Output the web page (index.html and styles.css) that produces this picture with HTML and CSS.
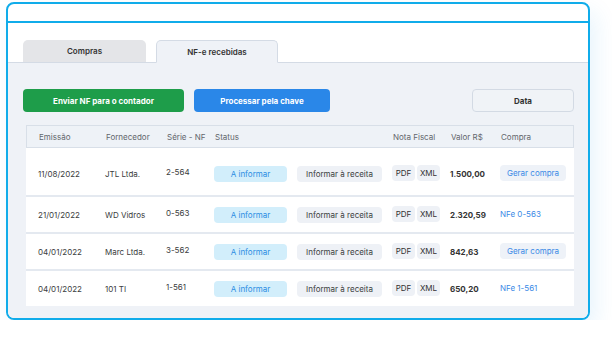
FILE: index.html
```html
<!DOCTYPE html>
<html lang="pt-BR">
<head>
<meta charset="utf-8">
<title>NF-e recebidas</title>
<link rel="stylesheet" href="styles.css">
</head>
<body>
<div class="frame">
  <div class="topbar"></div>
  <div class="tabs">
    <div class="tab tab-off">Compras</div>
    <div class="tab tab-on">NF-e recebidas</div>
  </div>
  <div class="content">
    <div class="actions">
      <button class="btn btn-green">Enviar NF para o contador</button>
      <button class="btn btn-blue">Processar pela chave</button>
      <button class="btn btn-data">Data</button>
    </div>
    <div class="table">
      <div class="row head">
        <span>Emissão</span><span>Fornecedor</span><span>Série - NF</span><span>Status</span><span></span><span>Nota Fiscal</span><span>Valor R$</span><span>Compra</span>
      </div>
      <div class="row first">
        <span>11/08/2022</span><span>JTL Ltda.</span><span class="serie">2-564</span>
        <span><i class="pill status">A informar</i></span>
        <span><i class="pill inform">Informar à receita</i></span>
        <span class="docs"><i class="chip">PDF</i><i class="chip">XML</i></span>
        <span class="val">1.500,00</span>
        <span><i class="pill gerar">Gerar compra</i></span>
      </div>
      <div class="row">
        <span>21/01/2022</span><span>WD Vidros</span><span class="serie">0-563</span>
        <span><i class="pill status">A informar</i></span>
        <span><i class="pill inform">Informar à receita</i></span>
        <span class="docs"><i class="chip">PDF</i><i class="chip">XML</i></span>
        <span class="val">2.320,59</span>
        <span class="link">NFe 0-563</span>
      </div>
      <div class="row">
        <span>04/01/2022</span><span>Marc Ltda.</span><span class="serie">3-562</span>
        <span><i class="pill status">A informar</i></span>
        <span><i class="pill inform">Informar à receita</i></span>
        <span class="docs"><i class="chip">PDF</i><i class="chip">XML</i></span>
        <span class="val">842,63</span>
        <span><i class="pill gerar">Gerar compra</i></span>
      </div>
      <div class="row">
        <span>04/01/2022</span><span>101 TI</span><span class="serie">1-561</span>
        <span><i class="pill status">A informar</i></span>
        <span><i class="pill inform">Informar à receita</i></span>
        <span class="docs"><i class="chip">PDF</i><i class="chip">XML</i></span>
        <span class="val">650,20</span>
        <span class="link">NFe 1-561</span>
      </div>
    </div>
  </div>
</div>
</body>
</html>
```
FILE: styles.css
```css
* { box-sizing: border-box; }
html, body { margin: 0; background: #fff; }
body {
  font-family: Inter, "Noto Sans", sans-serif;
  font-size: 8px;
  color: #3b3d40;
  padding: 2px 0 0 6px;
}
.frame {
  width: 584px;
  height: 318px;
  border: 2px solid #10acea;
  border-radius: 8px;
  overflow: hidden;
  background: #fff;
  display: flex;
  flex-direction: column;
  box-shadow: 6px 10px 22px rgba(30, 150, 230, 0.10);
}
.topbar {
  height: 19px;
  flex: none;
  border-bottom: 2px solid #10acea;
}
.tabs {
  flex: none;
  display: flex;
  gap: 10px;
  padding: 17px 0 0 15px;
  border-bottom: 1px solid #d4dbe5;
}
.tab {
  height: 23px;
  display: flex;
  align-items: center;
  justify-content: center;
  font-weight: 600;
  color: #333;
  border-radius: 5px 5px 0 0;
  margin-bottom: -1px;
}
.tab-off { width: 123px; background: #e4e5e8; border-bottom: 1px solid #d4dbe5; }
.tab-on { width: 122px; background: #eff2f7; border: 1px solid #d4dbe5; border-bottom: 1px solid #eff2f7; }
.content {
  flex: 1;
  background: #eff2f7;
  padding: 26px 14px 0 15px;
}
.actions {
  display: flex;
  gap: 10px;
  height: 23px;
}
.btn {
  font: inherit;
  font-weight: 700;
  height: 23px;
  border-radius: 4px;
  border: none;
  padding: 0;
  color: #fff;
}
.btn-green { width: 161px; background: #1e9d4a; }
.btn-blue { width: 136px; background: #2a87e8; }
.btn-data {
  width: 102px;
  margin-left: auto;
  background: #f0f3f7;
  border: 1px solid #d3dae4;
  color: #333;
}
.table {
  margin: 13px 0 0 3px;
  width: 548px;
  background: #fff;
}
.row {
  display: grid;
  grid-template-columns: 67px 61px 48px 83px 95px 58px 50px 1fr;
  align-items: center;
  padding-left: 12px;
  height: 37px;
  border-top: 2px solid #e4e9f0;
}
.row.head {
  height: 23px;
  background: #eef2f7;
  border: 1px solid #d8dfe8;
  color: #62666c;
}
.row.first { height: 47px; border-top: none; padding-top: 4px; }
.serie { margin-top: -3px; }
.pill, .chip {
  font-style: normal;
  display: inline-flex;
  align-items: center;
  justify-content: center;
  height: 16px;
  border-radius: 4px;
}
.status { width: 73px; background: #d2eefb; color: #2b8de3; margin-top: 1px; }
.inform { width: 85px; background: #eef1f6; color: #3b3d40; margin-top: 1px; }
.docs { display: flex; gap: 2px; margin-top: -1px; }
.chip { width: 23px; background: #eef1f6; color: #333; }
.val { font-weight: 700; color: #333; }
.gerar { width: 66px; background: #eef2f8; color: #3b8ae6; margin-top: -1px; }
.link { color: #3b8ae6; margin-top: -2px; }
```
